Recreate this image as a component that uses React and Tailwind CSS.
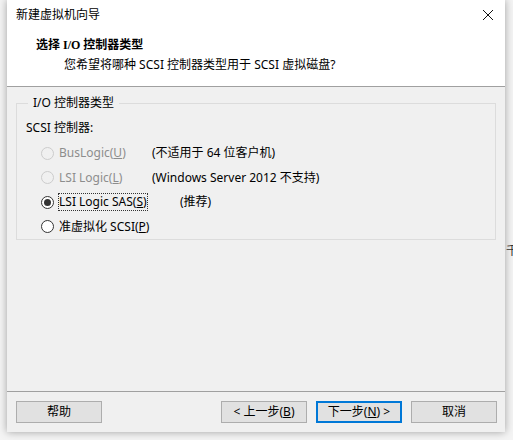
import React from "react";

const font = { fontFamily: '"Segoe UI", "Noto Sans", "Noto Sans CJK SC", sans-serif' };

function Radio({ checked, disabled }) {
  return (
    <span
      className={
        "flex h-[13px] w-[13px] shrink-0 items-center justify-center rounded-full border " +
        (disabled ? "border-[#cccccc] bg-[#f0f0f0]" : "border-[#333333] bg-white")
      }
    >
      {checked && <span className="h-[7px] w-[7px] rounded-full bg-[#333333]" />}
    </span>
  );
}

function Btn({ children, primary }) {
  return (
    <div
      className={
        "flex h-[22px] w-[86px] items-center justify-center bg-[#e1e1e1] text-[12px] text-black " +
        (primary ? "border-2 border-[#0078d7]" : "border border-[#adadad]")
      }
    >
      {children}
    </div>
  );
}

export default function App() {
  return (
    <div className="relative h-[440px] w-[513px] overflow-hidden bg-[#f4f4f4]" style={font}>
      <span className="absolute left-[506px] top-[243px] text-[12px] leading-[16px] text-[#333]">千</span>
      <div className="relative ml-[7px] flex h-[432px] w-[498px] flex-col bg-[#f0f0f0] shadow-[0_0_8px_rgba(0,0,0,0.35)]">
        <div className="flex h-[87px] flex-col border-b border-[#a0a0a0] bg-white">
          <div className="flex h-[30px] items-center justify-between pl-[9px] pr-[10px]">
            <span className="text-[12px] text-black">新建虚拟机向导</span>
            <svg width="12" height="12" viewBox="0 0 12 12" className="mr-[1px]">
              <path d="M1 1 L11 11 M11 1 L1 11" stroke="#111" strokeWidth="1" />
            </svg>
          </div>
          <div
            className="mt-[7px] pl-[29px] text-[12px] font-bold leading-[16px] text-black"
            style={{ fontFamily: '"Liberation Serif", "Noto Sans CJK SC", serif' }}
          >
            选择 I/O 控制器类型
          </div>
          <div className="mt-[4px] pl-[57px] text-[12px] leading-[16px] text-black">
            您希望将哪种 SCSI 控制器类型用于 SCSI 虚拟磁盘?
          </div>
        </div>

        <fieldset className="mx-[9px] mt-[8px] h-[145px] border border-[#dcdcdc] px-[9px]">
          <legend className="ml-[2px] px-[5px] text-[12px] leading-[16px] text-black">I/O 控制器类型</legend>
          <div className="mt-[9px] text-[12px] leading-[16px] text-black">SCSI 控制器:</div>
          <div className="mt-[5px] flex flex-col text-[12px] leading-[16px]">
            <div className="flex h-[24.5px] items-center">
              <div className="flex w-[126px] items-center gap-[5px] pl-[15px]">
                <Radio disabled />
                <span className="text-[#8d8d8d]">BusLogic(<span className="underline">U</span>)</span>
              </div>
              <span className="text-black">(不适用于 64 位客户机)</span>
            </div>
            <div className="flex h-[24.5px] items-center">
              <div className="flex w-[126px] items-center gap-[5px] pl-[15px]">
                <Radio disabled />
                <span className="text-[#8d8d8d]">LSI Logic(<span className="underline">L</span>)</span>
              </div>
              <span className="text-black">(Windows Server 2012 不支持)</span>
            </div>
            <div className="flex h-[24.5px] items-center">
              <div className="flex w-[154px] items-center gap-[4px] pl-[15px]">
                <Radio checked />
                <span className="border border-dotted border-[#333] text-black">
                  LSI Logic SAS(<span className="underline">S</span>)
                </span>
              </div>
              <span className="text-black">(推荐)</span>
            </div>
            <div className="flex h-[24.5px] items-center">
              <div className="flex items-center gap-[5px] pl-[15px]">
                <Radio />
                <span className="text-black">准虚拟化 SCSI(<span className="underline">P</span>)</span>
              </div>
            </div>
          </div>
        </fieldset>

        <div className="flex-1" />
        <div className="border-t border-[#a0a0a0]" />
        <div className="flex h-[40px] items-start pt-[9px] pl-[9px] pr-[8px]">
          <Btn>帮助</Btn>
          <div className="flex-1" />
          <div className="flex gap-[9px]">
            <Btn>&lt; 上一步(<span className="underline">B</span>)</Btn>
            <Btn primary>下一步(<span className="underline">N</span>) &gt;</Btn>
            <Btn>取消</Btn>
          </div>
        </div>
      </div>
    </div>
  );
}
